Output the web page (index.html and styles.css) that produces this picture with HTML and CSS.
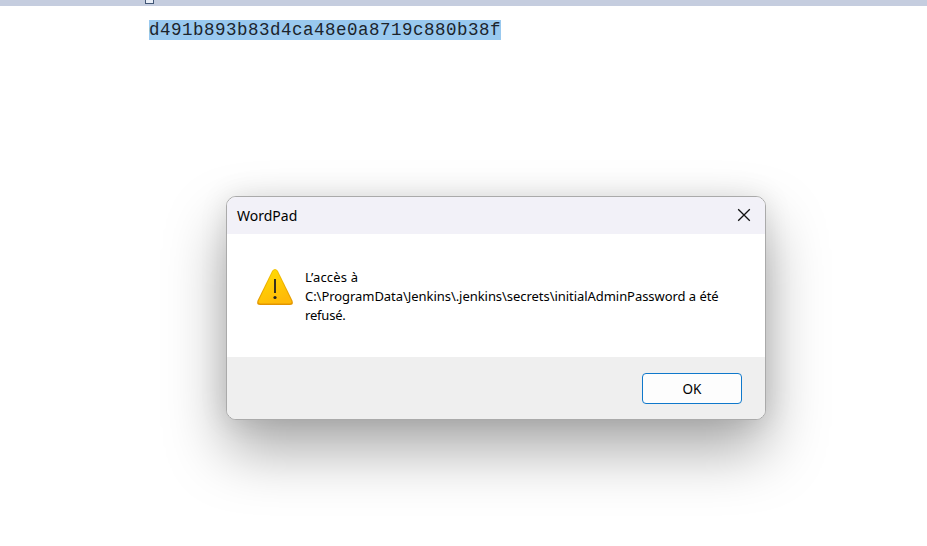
FILE: index.html
```html
<!DOCTYPE html>
<html lang="fr">
<head>
<meta charset="utf-8">
<title>WordPad</title>
<link rel="stylesheet" href="styles.css">
</head>
<body>
<main class="app">
  <div class="ruler"><span class="ruler-marker"></span></div>
  <div class="document"><span class="selection">d491b893b83d4ca48e0a8719c880b38f</span></div>
  <section class="dialog" role="alertdialog" aria-labelledby="dialog-title">
    <header class="titlebar">
      <span class="title" id="dialog-title">WordPad</span>
      <svg class="close" width="14" height="14" viewBox="0 0 14 14"><path d="M1.2 1.2L12.8 12.8M12.8 1.2L1.2 12.8"/></svg>
    </header>
    <div class="content">
      <svg class="warning" width="38" height="38" viewBox="0 0 38 38">
        <defs>
          <linearGradient id="fill" x1="0" y1="0" x2=".5" y2="1"><stop offset="0" stop-color="#ffe000"/><stop offset="1" stop-color="#ffba08"/></linearGradient>
          <linearGradient id="edge" x1="0" y1="0" x2="0" y2="1"><stop offset="0" stop-color="#f4c400"/><stop offset="1" stop-color="#e29400"/></linearGradient>
        </defs>
        <path d="M16.2 2.7Q19 -.9 21.8 2.7L36.4 32.6Q38 37 34 37H4Q0 37 1.6 32.6Z" fill="url(#edge)"/>
        <path d="M17.2 3.1Q19 .7 20.8 3.1L35.2 32.5Q36.4 35.5 33.7 35.5H4.3Q1.6 35.5 2.8 32.5Z" fill="url(#fill)"/>
        <path d="M19 11V25" stroke="#222" stroke-width="1.8"/>
        <circle cx="19" cy="29.5" r="1.6" fill="#222"/>
      </svg>
      <p class="message"><span class="line first">L’accès à</span><span class="line path">C:\ProgramData\Jenkins\.jenkins\secrets\initialAdminPassword a été</span><span class="line last">refusé.</span></p>
    </div>
    <footer class="actions"><button class="ok" type="button">OK</button></footer>
  </section>
</main>
</body>
</html>
```
FILE: styles.css
```css
* { box-sizing: border-box; }
body { margin: 0; background: #fff; }
.app { position: relative; width: 927px; height: 546px; overflow: hidden; }
.ruler { height: 6px; padding-left: 145px; background: #c5cddf; }
.ruler-marker { display: block; width: 9px; height: 4px; border: 1px solid #415676; border-top: 0; background: #e9eef7; }
.document { padding: 14px 0 0 149px; }
.selection {
  display: block; width: 352px; height: 20px; background: #99c9ef; color: #1c242b;
  font: 17.5px/21px "Liberation Mono", monospace; letter-spacing: .5px; white-space: nowrap;
}
.dialog {
  position: absolute; left: 226px; top: 196px; width: 540px; height: 224px;
  display: flex; flex-direction: column; overflow: hidden;
  border: 1px solid #aaa; border-radius: 10px; background: #fff; color: #000;
  font-family: "Noto Sans", sans-serif;
  box-shadow: 0 30px 60px rgba(0,0,0,.34), 0 0 28px rgba(0,0,0,.1);
}
.titlebar { height: 37px; flex: none; display: flex; align-items: center; justify-content: space-between; padding: 0 14px 0 10px; background: #f2f1f8; }
.title { font-size: 14px; line-height: 20px; letter-spacing: 0; }
.close { margin-top: -1px; fill: none; stroke: #111; stroke-width: 1.3; }
.content { flex: 1; display: flex; padding: 34px 0 0 29px; }
.warning { flex: none; }
.message { margin: 0 0 0 11px; font-size: 13px; line-height: 19px; white-space: nowrap; }
.line { display: block; letter-spacing: -.05px; }
.first { letter-spacing: .2px; }
.last { letter-spacing: -.2px; }
.actions { height: 62px; flex: none; display: flex; justify-content: flex-end; padding: 16px 23px 0; background: #efefef; }
.ok { width: 100px; height: 31px; padding: 1px 0 0; border: 1px solid #0f78cb; border-radius: 4px; background: #fdfdfd; color: #000; font: 13.5px/28px "Noto Sans", sans-serif; }
```
